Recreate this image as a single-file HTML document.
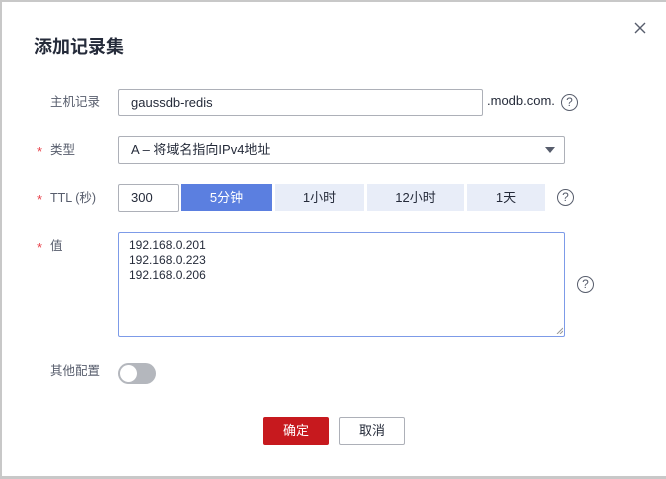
<!DOCTYPE html>
<html><head><meta charset="utf-8"><style>
*{box-sizing:border-box;margin:0;padding:0}
body{width:666px;height:479px;background:#c8c8c8;position:relative;overflow:hidden;font-family:"Liberation Sans","Noto Sans CJK SC",sans-serif;font-size:13px;color:#252b3a}
.dlg{position:absolute;left:2px;top:2px;width:664px;height:474px;background:#fff}
.a{position:absolute}
.lbl{position:absolute;left:50px;color:#575d6c;font-size:12.5px;line-height:16px}
.star{position:absolute;left:37px;color:#e8414a;font-size:13px;line-height:16px}
.box{position:absolute;border:1px solid #adb0b8;border-radius:2px;background:#fff;padding-left:12px;font-size:13px;line-height:26px}
.q{position:absolute;width:17px;height:17px;border:1.2px solid #575d6c;border-radius:50%;font-size:12px;line-height:15px;text-align:center;color:#575d6c}
.seg{position:absolute;top:184px;height:27px;background:#e8edf8;text-align:center;line-height:27px;font-size:13px;color:#252b3a}
</style></head><body>
<div class="dlg"></div>
<div class="a" style="left:34px;top:36px;font-size:18px;font-weight:bold;line-height:22px">添加记录集</div>
<svg class="a" style="left:634px;top:22px" width="12" height="12"><path d="M1 1L11 11M11 1L1 11" stroke="#575d6c" stroke-width="1.4"/></svg>

<div class="lbl" style="top:94px">主机记录</div>
<div class="box" style="left:118px;top:89px;width:365px;height:27px">gaussdb-redis</div>
<div class="a" style="left:487px;top:93px;font-size:13px;line-height:16px">.modb.com.</div>
<div class="q" style="left:561px;top:94px">?</div>

<div class="star" style="top:144px">*</div><div class="lbl" style="top:142px">类型</div>
<div class="box" style="left:118px;top:136px;width:447px;height:28px">A – 将域名指向IPv4地址</div>
<svg class="a" style="left:545px;top:147px" width="10" height="6"><path d="M0 0H10L5 6Z" fill="#575d6c"/></svg>

<div class="star" style="top:192px">*</div><div class="lbl" style="top:190px">TTL (秒)</div>
<div class="box" style="left:118px;top:184px;width:61px;height:28px">300</div>
<div class="seg" style="left:181px;width:91px;background:#5b7fe0;color:#fff">5分钟</div>
<div class="seg" style="left:275px;width:89px">1小时</div>
<div class="seg" style="left:367px;width:97px">12小时</div>
<div class="seg" style="left:467px;width:78px">1天</div>
<div class="q" style="left:557px;top:189px">?</div>

<div class="star" style="top:240px">*</div><div class="lbl" style="top:238px">值</div>
<div class="a" style="left:118px;top:232px;width:447px;height:105px;border:1px solid #7d9be8;border-radius:2px;padding:5px 10px;font-size:12px;line-height:15px">192.168.0.201<br>192.168.0.223<br>192.168.0.206</div>
<svg class="a" style="left:556px;top:327px" width="7" height="7"><path d="M1 7L7 1M4 7L7 4" stroke="#999" stroke-width="1"/></svg>
<div class="q" style="left:577px;top:276px">?</div>

<div class="lbl" style="top:363px">其他配置</div>
<div class="a" style="left:118px;top:363px;width:38px;height:21px;border-radius:11px;background:#b4b7bd"><div class="a" style="left:2px;top:2px;width:17px;height:17px;border-radius:50%;background:#fff"></div></div>

<div class="a" style="left:263px;top:417px;width:66px;height:28px;background:#c7191e;border-radius:2px;color:#fff;text-align:center;line-height:28px">确定</div>
<div class="a" style="left:339px;top:417px;width:66px;height:28px;border:1px solid #adb0b8;border-radius:2px;background:#fff;text-align:center;line-height:26px">取消</div>
</body></html>
